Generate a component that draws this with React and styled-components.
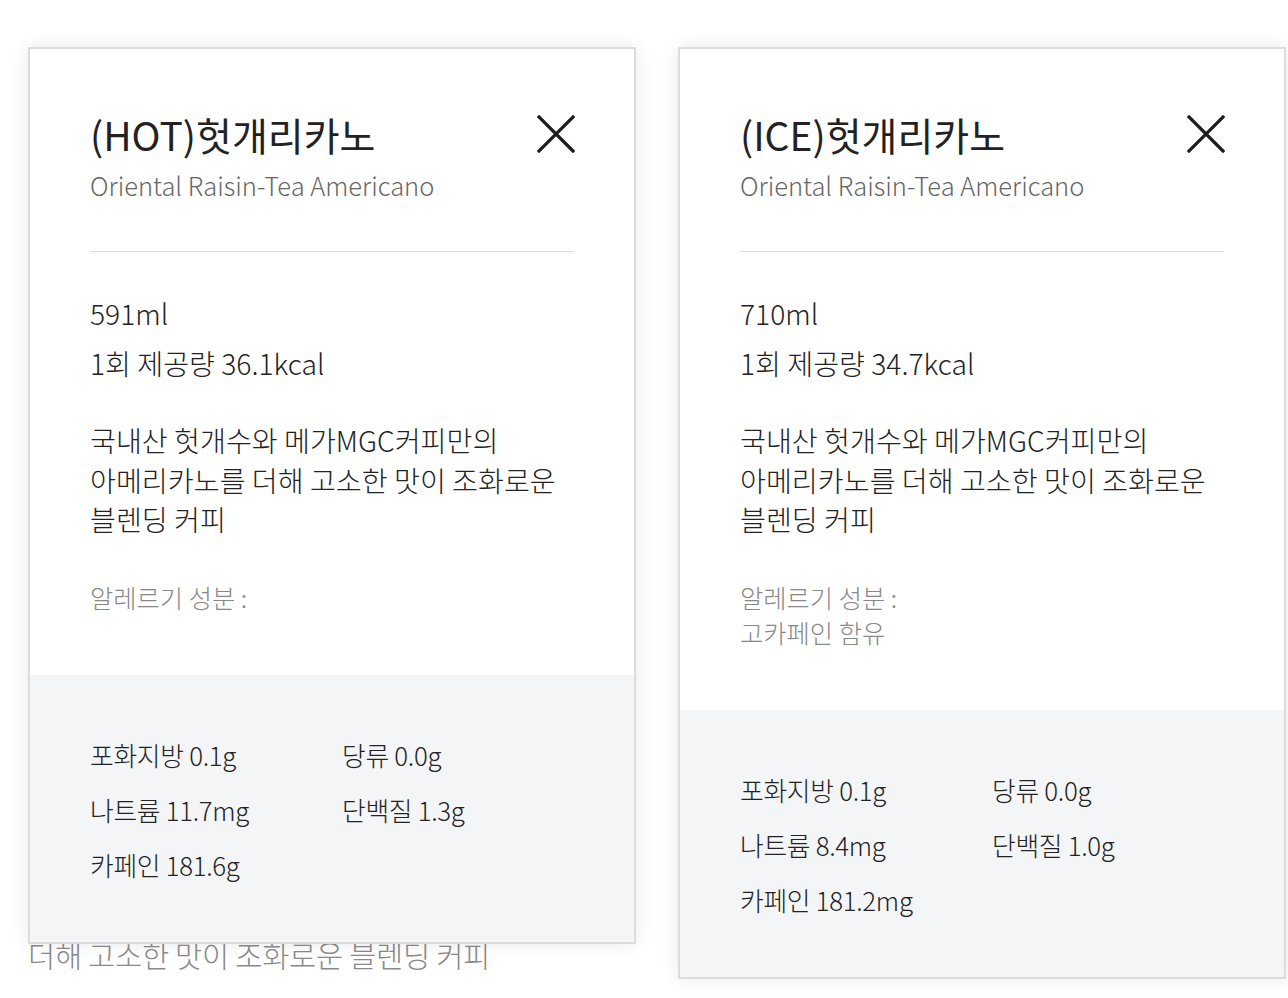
import React from 'react';
import styled, { createGlobalStyle } from 'styled-components';

const GlobalStyle = createGlobalStyle`
    html, body {
        margin: 0;
        padding: 0;
        background: #ffffff;
    }

    body {
        font-family: "Noto Sans CJK KR", "Noto Sans", sans-serif;
        color: #222;
        -webkit-font-smoothing: antialiased;
    }

    * {
        box-sizing: border-box;
    }
`;

const menus = [
    {
        id: 'hot',
        name: '(HOT)헛개리카노',
        english: 'Oriental Raisin-Tea Americano',
        volume: '591ml',
        kcal: '1회 제공량 36.1kcal',
        description: ['국내산 헛개수와 메가MGC커피만의', '아메리카노를 더해 고소한 맛이 조화로운', '블렌딩 커피'],
        allergy: [],
        nutrition: ['포화지방 0.1g', '당류 0.0g', '나트륨 11.7mg', '단백질 1.3g', '카페인 181.6g']
    },
    {
        id: 'ice',
        name: '(ICE)헛개리카노',
        english: 'Oriental Raisin-Tea Americano',
        volume: '710ml',
        kcal: '1회 제공량 34.7kcal',
        description: ['국내산 헛개수와 메가MGC커피만의', '아메리카노를 더해 고소한 맛이 조화로운', '블렌딩 커피'],
        allergy: ['고카페인 함유'],
        nutrition: ['포화지방 0.1g', '당류 0.0g', '나트륨 8.4mg', '단백질 1.0g', '카페인 181.2mg']
    }
];

function CloseIcon() {
    return (
        <svg width="38" height="38" viewBox="0 0 38 38" fill="none">
            <path d="M2 2L36 36M36 2L2 36" stroke="#1e1e1e" strokeWidth="3.2" strokeLinecap="square" />
        </svg>
    );
}

function MenuCard({ menu }) {
    return (
        <Card>
            <CardBody>
                <TitleRow>
                    <Title>{menu.name}</Title>
                    <CloseButton type="button" aria-label="닫기">
                        <CloseIcon />
                    </CloseButton>
                </TitleRow>
                <EnglishName>{menu.english}</EnglishName>
                <Divider />
                <Amount>{menu.volume}</Amount>
                <Amount>{menu.kcal}</Amount>
                <Description>
                    {menu.description.map((line) => (
                        <span key={line}>{line}</span>
                    ))}
                </Description>
                <Allergy>
                    <span>알레르기 성분 :</span>
                    {menu.allergy.map((item) => (
                        <span key={item}>{item}</span>
                    ))}
                </Allergy>
            </CardBody>
            <Nutrition>
                {menu.nutrition.map((item) => (
                    <li key={item}>{item}</li>
                ))}
            </Nutrition>
        </Card>
    );
}

function App() {
    return (
        <Page>
            <GlobalStyle />
            <BehindCopy>더해 고소한 맛이 조화로운 블렌딩 커피</BehindCopy>
            <Overlay>
                {menus.map((menu) => (
                    <MenuCard key={menu.id} menu={menu} />
                ))}
            </Overlay>
        </Page>
    );
}

const Page = styled.div`
    position: relative;
    width: 1288px;
    height: 998px;
    overflow: hidden;
`;

const BehindCopy = styled.p`
    margin: 0;
    padding: 934px 0 0 28px;
    font-size: 29.6px;
    line-height: 42px;
    font-weight: 300;
    color: #8a8a8a;
    letter-spacing: -0.3px;
`;

const Overlay = styled.div`
    position: absolute;
    top: 47px;
    left: 28px;
    display: flex;
    align-items: flex-start;
    gap: 42px;
`;

const Card = styled.section`
    width: 608px;
    flex-shrink: 0;
    background: #ffffff;
    border: 2px solid #dcdcdc;
    box-shadow: 0 0 18px rgba(0, 0, 0, 0.09);
`;

const CardBody = styled.div`
    padding: 60px 60px 60px;
`;

const TitleRow = styled.div`
    display: flex;
    align-items: center;
    justify-content: space-between;
`;

const Title = styled.h2`
    margin: 0;
    font-size: 39px;
    line-height: 50px;
    font-weight: 400;
    color: #222;
`;

const CloseButton = styled.button`
    display: flex;
    padding: 0;
    margin-right: -1px;
    border: none;
    background: none;
    cursor: pointer;
`;

const EnglishName = styled.p`
    margin: 8px 0 0;
    font-size: 25.5px;
    line-height: 36px;
    font-weight: 300;
    color: #666;
`;

const Divider = styled.hr`
    margin: 48px 0 36px;
    border: none;
    border-top: 1px solid #dddddd;
`;

const Amount = styled.p`
    margin: 0;
    font-size: 28.2px;
    line-height: 50px;
    font-weight: 300;
    color: #222;
`;

const Description = styled.p`
    display: flex;
    flex-direction: column;
    margin: 32px 0 0;
    font-size: 28.2px;
    line-height: 39.5px;
    font-weight: 300;
    color: #222;
`;

const Allergy = styled.p`
    display: flex;
    flex-direction: column;
    margin: 41px 0 0;
    font-size: 25.3px;
    line-height: 35px;
    font-weight: 300;
    color: #888;
`;

const Nutrition = styled.ul`
    display: grid;
    grid-template-columns: 252px 1fr;
    margin: 0;
    padding: 52px 60px 50px;
    list-style: none;
    background: #f4f5f7;

    li {
        font-size: 25.8px;
        line-height: 55px;
        font-weight: 300;
        color: #222;
        letter-spacing: -0.3px;
    }
`;

export default App;
